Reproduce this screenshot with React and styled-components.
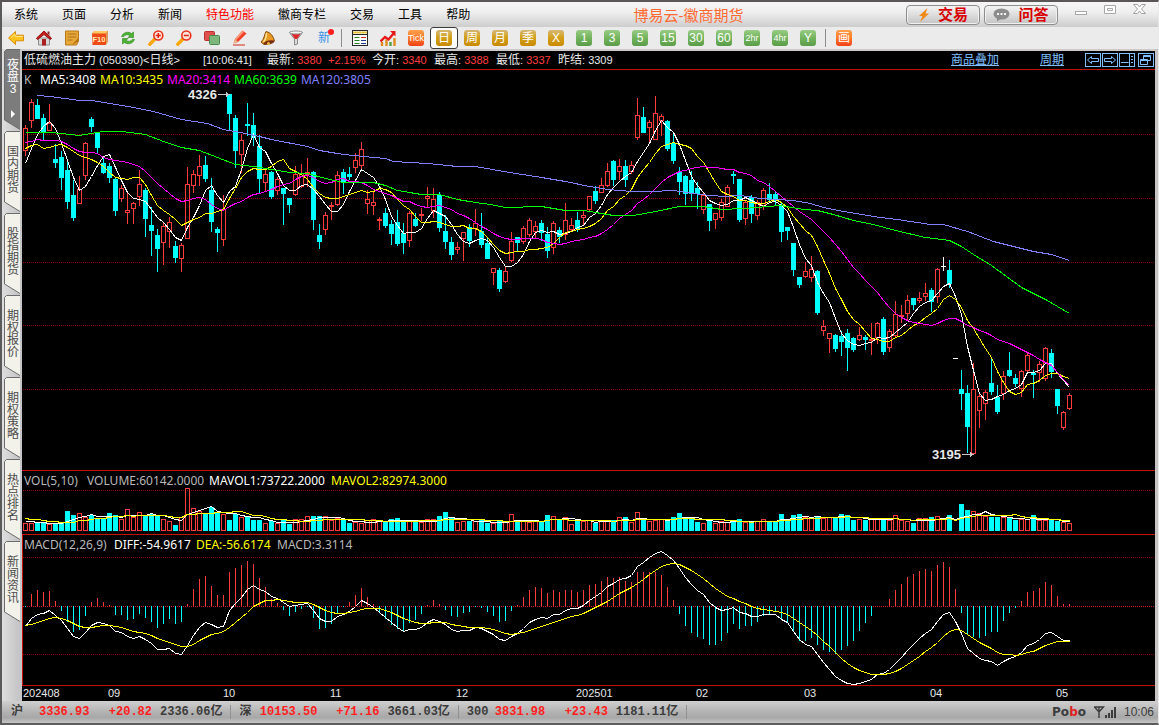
import React from "react";
import styled, { createGlobalStyle } from "styled-components";

const GlobalStyle = createGlobalStyle`
*{box-sizing:border-box;}
body{
margin:0;
font-family:"Liberation Sans","Noto Sans CJK SC",sans-serif;
font-size:12px;
}
button{font-family:inherit;border:0;padding:0;margin:0;background:none;cursor:pointer;}
svg{display:block;flex:none;}
`;

const RED = "#ff3c3c";
const CYAN = "#00ffff";

// kind (r = up, c = down, w = flat) then high, body top, body bottom, low
const CANDLES = `
r125,128,151,156 r99,102,121,128 c99,105,119,119 c114,118,132,140 r104,123,131,131
c144,159,163,168 c151,157,178,190 c161,170,202,209 c180,195,218,221 r176,189,204,204
r142,143,176,180 c117,119,127,132 c132,133,148,153 c157,163,173,174 c163,166,178,183
c178,179,211,216 r185,188,199,202 r192,210,213,224 r202,203,209,224 r170,184,197,206
c188,190,219,237 c207,225,231,256 c229,235,249,272 r223,226,243,265 r217,222,232,248
c241,246,258,263 r243,245,259,272 r167,184,239,239 r170,174,186,193 r155,166,176,186
c156,165,179,182 c178,190,222,232 c227,229,233,252 r195,209,240,246 c94,94,114,130
c115,118,151,168 r134,140,155,173 c103,124,126,136 c113,125,138,146 c135,146,179,193
r168,174,183,192 c171,172,197,199 r177,179,191,195 c188,188,194,225 c198,198,205,213
r166,174,195,196 r164,173,187,188 r158,172,175,187 c171,172,220,230 c224,235,242,249
r212,215,230,235 r202,205,206,220 r171,175,205,206 c169,172,182,194 c167,174,177,180
r153,160,168,173 r142,149,166,169 r190,199,204,214 r191,202,206,215 r217,219,221,230
c208,213,226,228 c220,224,234,245 c210,222,244,246 c223,233,243,254 r211,213,241,247
c213,219,226,227 r208,214,216,221 r187,196,199,207 r188,199,211,218 c192,195,228,232
c215,231,242,249 c237,242,255,260 r242,247,250,254 r232,232,239,261 c224,227,241,247
r209,223,229,236 c213,231,245,248 c237,243,259,259 r268,268,273,285 c268,270,289,292
r267,271,282,283 r232,241,261,262 c237,237,243,252 r226,228,242,244 r218,220,235,237
r221,226,232,238 c220,223,233,241 c227,234,251,258 r221,223,248,254 c227,230,237,243
r203,220,235,240 r218,225,230,232 c212,220,229,232 r211,215,218,225 r196,196,210,212
c186,191,201,204 r178,185,193,193 r163,171,186,187 c160,161,180,186 r159,166,172,180
c160,166,180,187 r161,165,172,174 r98,115,138,140 c107,117,133,133 r120,122,128,143
r96,113,140,140 r114,116,121,136 c120,121,149,151 c132,143,161,164 c167,172,182,195
c175,176,194,205 c171,180,194,201 c182,188,194,209 r193,195,210,214 c204,204,221,231
r213,213,220,229 r199,202,218,221 r185,187,207,207 c171,174,176,184 c179,179,220,222
r201,202,219,225 c195,197,214,223 r200,202,216,220 r188,190,206,210 c183,194,200,203
c191,194,201,205 c203,205,232,242 c227,227,231,240 c243,243,270,276 c277,277,285,288
r262,271,277,278 r256,269,278,282 c270,271,313,315 r320,326,331,336 r333,333,339,353
c334,335,349,352 c331,336,342,356 c329,333,348,371 c337,338,350,352 r327,335,340,341
c335,337,340,350 r323,339,341,355 r322,323,338,344 c317,319,352,355 r329,331,348,352
r301,314,336,338 r305,315,317,323 r295,300,314,321 c298,298,305,310 r292,298,301,303
r283,293,297,301 c288,290,302,312 r268,269,297,303 w257,266,267,271 c260,270,284,288
w358,358,359,359 c370,389,394,410 c385,393,427,453 r363,389,454,454 r394,396,411,428
r390,392,404,420 c359,383,392,395 c385,397,412,414 r371,376,394,400 c352,370,376,377
c374,378,384,387 r370,371,389,397 r353,355,371,372 c370,373,375,398 r361,364,373,382
r347,348,379,381 c349,353,372,378 c389,389,406,414 r411,412,428,430 r393,395,409,410
`
  .trim()
  .split(/\s+/)
  .map((s) => {
    const [high, top, bottom, low] = s.slice(1).split(",").map(Number);
    return { kind: s[0], high, top, bottom, low, close: s[0] === "c" ? bottom : top };
  });

const VOLUMES = [
  23, 23, 26, 23, 21, 23, 25, 60, 48, 53, 43, 48, 40, 36, 54, 48, 35, 65, 43, 56,
  48, 52, 46, 35, 29, 18, 43, 128, 68, 59, 52, 73, 55, 50, 33, 52, 43, 44, 33, 33,
  23, 30, 23, 33, 21, 35, 35, 44, 45, 45, 44, 32, 38, 33, 24, 28, 23, 32, 35, 32,
  30, 35, 38, 32, 30, 27, 28, 35, 35, 45, 56, 38, 26, 29, 30, 30, 32, 24, 23, 30,
  26, 50, 33, 30, 28, 30, 28, 48, 44, 35, 41, 20, 35, 30, 32, 24, 33, 30, 33, 41,
  42, 26, 56, 33, 30, 32, 35, 36, 42, 54, 43, 38, 27, 23, 32, 23, 30, 28, 30, 36,
  26, 29, 30, 36, 30, 28, 51, 33, 48, 51, 42, 40, 43, 40, 43, 41, 51, 47, 33, 35,
  33, 38, 38, 38, 32, 47, 32, 29, 23, 38, 38, 42, 44, 36, 48, 3, 81, 63, 59, 53,
  44, 42, 42, 43, 40, 33, 35, 36, 48, 32, 32, 33, 30, 26, 23,
];

const MA60 =
  "25,132 49,132 61,133 79,135 103,131 121,131 145,134 163,141 181,147 199,150 217,157 235,164 253,166 271,169 289,172 307,173 325,178 343,182 373,182 385,185 397,190 409,192 421,194 439,194 457,199 475,202 490,204 505,207 541,206 565,210 583,210 595,212 613,215 633,215 655,211 679,206 703,206 721,209 743,208 780,205 803,209 817,210 833,214 853,220 873,224 895,230 925,237 949,240 961,246 973,254 991,265 1021,287 1045,299 1069,313";
const MA120 =
  "37,95 50,96 79,100 91,100 109,103 115,104 133,107 153,111 181,119 207,123 223,129 240,132 259,136 271,139 307,146 319,150 343,154 373,157 385,158 393,161 427,163 457,166 475,166 509,172 535,176 565,181 589,186 607,189 631,191 650,191 673,190 700,194 723,196 740,195 760,198 793,200 810,203 823,207 843,211 880,217 897,219 930,224 943,224 967,231 993,241 1033,251 1051,254 1069,260";

const closes = CANDLES.map((c) => c.close);
const xOf = (i) => 25 + i * 6;

const average = (list, n, head) =>
  list.map((_, i) => {
    if (i < n - 1) return head[i];
    let sum = 0;
    for (let k = i - n + 1; k <= i; k++) sum += list[k];
    return sum / n;
  });

const toPoints = (list, yOf = (v) => v) =>
  list.map((v, i) => `${xOf(i)},${Math.round(yOf(v))}`).join(" ");

const ma5 = average(closes, 5, [163, 148, 134, 126]);
const ma10 = average(closes, 10, [148, 145, 144, 148, 147, 145, 144, 147, 151]);
const ma20 = average(closes, 20, [
  142, 141, 139, 140, 140, 140, 141, 144, 148, 151, 152, 152, 153, 157, 159, 160, 161, 162, 164,
]);
const mavol1 = average(VOLUMES, 5, [29, 29, 28, 26]);
const mavol2 = average(VOLUMES, 10, [38, 37, 35, 33, 31, 29, 27, 27, 26]);

// MACD(12,26,9)
let fast = 145.2;
let slow = 135;
let signal = 9.9;
const macd = closes.map((c, i) => {
  if (i > 0) {
    fast += ((c - fast) * 2) / 13;
    slow += ((c - slow) * 2) / 27;
    signal += (fast - slow - signal) * 0.2;
  }
  return { diff: (fast - slow) * 1.93, dea: signal * 1.93 };
});

const Window = styled.div`
min-height:100vh;
display:flex;
flex-direction:column;
background-color:#c8c4c4;
border-left:2px solid #5a5a5a;
border-top:2px solid #5a5656;
border-bottom:2px solid #5c5c5c;
border-right:1px solid #e8e8e8;
`;
const TitleBar = styled.header`
height:25px;
display:flex;
align-items:center;
background:linear-gradient(#f6f6f6,#efefef 40%,#cdcdcd);
`;
const Menu = styled.nav`
flex:20 1 0;
display:flex;
gap:24px;
padding-left:12px;
`;
const MenuItem = styled.button`
font-size:12px;
line-height:20px;
white-space:nowrap;
color:${(props) => (props.$hot ? "#ff0000" : "#000")};
`;
const AppTitle = styled.h1`
margin:0;
font-size:15px;
font-weight:400;
color:#ff6a33;
white-space:nowrap;
`;
const TitleTools = styled.div`
flex:13 1 0;
display:flex;
justify-content:flex-end;
align-items:center;
gap:4px;
padding-right:12px;
`;
const PillButton = styled.button`
display:flex;
align-items:center;
justify-content:center;
gap:8px;
width:74px;
height:20px;
border:1px solid #8e8e8e;
border-radius:4px;
background:linear-gradient(#f4f4f4,#dcdcdc 50%,#c4c4c4);
box-shadow:inset 0 0 0 1px #f0f0f0;
color:#d80000;
font-size:15px;
line-height:18px;
font-weight:700;
white-space:nowrap;
`;
const WindowButtons = styled.div`
display:flex;
gap:16px;
margin-left:13px;
padding-bottom:10px;
`;
const ToolBar = styled.div`
height:22px;
display:flex;
align-items:center;
background-color:#ebebeb;
`;
const ToolButton = styled.button`
width:28px;
height:22px;
display:flex;
align-items:center;
justify-content:center;
border:${(props) => (props.$active ? "1px solid #3a3a3a" : "0")};
border-radius:3px;
background-color:${(props) => (props.$active ? "#fff" : "transparent")};
`;
const Separator = styled.span`
width:1px;
height:18px;
margin:0 4px 0 3px;
background-color:#8c8c8c;
`;
const fills = {
  gold: "linear-gradient(#d6b878,#d3a11c 45%,#c98a00)",
  green: "linear-gradient(#98cc84,#74b45e 50%,#5a9c48)",
  orange: "linear-gradient(#ffa04c,#ff7a2a 50%,#f04018)",
};
const Chip = styled.span`
width:16px;
height:16px;
display:flex;
align-items:center;
justify-content:center;
overflow:hidden;
border-radius:3px;
background:${(props) => fills[props.$fill]};
color:#fff;
font-size:${(props) => (props.$small ? 9 : 12)}px;
line-height:16px;
white-space:nowrap;
`;
const NewsMark = styled.span`
position:relative;
color:#3a90e8;
font-size:12px;
line-height:18px;
&::after{
content:"";
position:absolute;
top:0;
right:-4px;
width:6px;
height:6px;
border-radius:50%;
background-color:#ff1e1e;
}
`;

const Main = styled.main`
flex:1;
display:flex;
`;
const SideTabs = styled.nav`
width:20px;
display:flex;
flex-direction:column;
gap:1px;
padding-left:2px;
background:linear-gradient(90deg,#dedede,#c6c6c8 80%);
`;
const Tab = styled.button`
position:relative;
width:16px;
height:81px;
padding:${(props) => (props.$active ? 10 : 15)}px 1px 0 3px;
font-size:12px;
line-height:12px;
text-align:center;
word-break:break-all;
display:flex;
align-items:flex-start;
color:${(props) => (props.$active ? "#fff" : "#4c4c4c")};
svg{position:absolute;left:0;top:0;}
span{position:relative;width:12px;}
`;

const Board = styled.section`
flex:1;
min-width:0;
display:flex;
flex-direction:column;
background-color:#000;
border-top:2px solid #cfcaca;
margin-right:3px;
overflow:hidden;
`;
const QuoteBar = styled.div`
height:19px;
display:flex;
align-items:center;
padding:0 1px 0 2px;
border-bottom:1px solid #c01408;
color:#e8e8e8;
font-size:11px;
line-height:18px;
white-space:nowrap;
`;
const Quote = styled.span`
width:${(props) => props.$width}px;
color:${(props) => (props.$up ? RED : "inherit")};
flex:none;
em{font-style:normal;color:${RED};}
b{font-weight:400;font-size:12px;}
`;
const QuoteLinks = styled.div`
flex:1;
display:flex;
justify-content:flex-end;
align-items:center;
gap:1px;
`;
const QuoteLink = styled.a`
color:#80c0ff;
font-size:12px;
text-decoration:underline;
margin-right:${(props) => props.$gap}px;
`;
const Panel = styled.div`
flex:${(props) => (props.$grow ? "1 0" : "0 0")} ${(props) => props.$height}px;
display:flex;
flex-direction:column;
border-bottom:1px solid #c01408;
border-left:${(props) => (props.$edge ? "1px solid #c01408" : "0")};
padding-left:${(props) => (props.$edge ? 0 : 1)}px;
`;
const Legend = styled.div`
height:18px;
display:flex;
gap:4px;
padding:2px 0 0 1px;
font-family:"Noto Sans",sans-serif;
font-size:12px;
line-height:16px;
white-space:nowrap;
`;
const LegendItem = styled.span`
color:${(props) => props.$color};
min-width:${(props) => props.$min || 0}px;
`;
const Plot = styled.svg`
width:100%;
height:0;
min-height:0;
flex:1 1 0;
overflow:visible;
`;
const Axis = styled.svg`
width:100%;
height:15px;
`;

const StatusBar = styled.footer`
height:22px;
display:flex;
align-items:center;
padding:0 4px 0 9px;
background:linear-gradient(#d0d0d0,#b0b0b0 55%,#a8a8a8 75%,#c4c4c4);
color:#3c3c3c;
font-family:"Liberation Mono","Noto Sans CJK SC",monospace;
font-size:12px;
font-weight:700;
white-space:nowrap;
`;
const Index = styled.div`
display:flex;
border-right:1px solid #909090;
line-height:14px;
margin-right:8px;
padding-right:8px;
`;
const IndexName = styled.span`
width:${(props) => props.$width}px;
`;
const IndexValue = styled.span`
width:${(props) => props.$width}px;
text-align:right;
margin-right:8px;
color:#ff2020;
`;
const StatusRight = styled.div`
flex:1;
display:flex;
justify-content:flex-end;
align-items:center;
gap:8px;
font-family:"Liberation Sans",sans-serif;
font-weight:400;
`;
const Brand = styled.span`
font-family:"DejaVu Sans",sans-serif;
font-weight:700;
i{font-style:normal;color:#e02020;}
`;

const Icon = ({ children, size = 16 }) => (
  <svg width={size} height={size} viewBox="0 0 16 16" aria-hidden="true">
    {children}
  </svg>
);

const BackIcon = () => (
  <Icon>
    <path d="M0.5 8 7.5 1.5v3.7h8v5.6h-8v3.7z" fill="#ffc21e" stroke="#d88e08" />
    <path d="M3 7.5 7 4v2.5h8" fill="none" stroke="#ffe58a" />
  </Icon>
);
const HomeIcon = () => (
  <Icon>
    <path d="M2.5 8h11v7h-11z" fill="#d8d8d8" stroke="#8c8c8c" />
    <path d="M0.5 8.2 8 1l7.5 7.2-1 1.3L8 4.5 1.5 9.5z" fill="#c81c1c" stroke="#941010" />
    <path d="M11.5 1.5h2v4l-2-2z" fill="#8c2a2a" />
    <path d="M6 9h4v6.5H6z" fill="#a82020" />
  </Icon>
);
const NoteIcon = () => (
  <Icon>
    <path d="M1.5 1h13v10l-2 4h-11z" fill="#e8a838" stroke="#b87818" />
    <path d="M3.500 4h9M3.500 7h9M3.500 10h5" stroke="#a87020" />
    <path d="M8 15l6-3.5V8z" fill="#b87014" />
  </Icon>
);
const F10Icon = () => (
  <Icon>
    <path d="M0 3.500 2.500 1H16l-.5 11-2 3H.500z" fill="#f04a18" />
    <path d="M0 3.500 2.500 1H16l-2 2.500z" fill="#ffc860" />
    <path d="M14 3.500 16 1l-.5 11-1.500 3z" fill="#d8a060" />
    <text x="0.500" y="12" fontSize="7.500" fontWeight="700" fill="#ffe9b0">F10</text>
  </Icon>
);
const RefreshIcon = () => (
  <Icon>
    <path d="M1.500 6.500C3.500 1.500 9 1.500 11.500 3.500L13.500 2v5.500H8l2-2C7.500 4.200 5 4.500 3.500 6.800z" fill="#4cb432" stroke="#2e8420" strokeWidth=".6" />
    <path d="M14.500 9.500C12.500 14.500 7 14.500 4.500 12.500L2.500 14V8.500H8l-2 2c2.500 1.300 5 1 6.500-1.300z" fill="#4cb432" stroke="#2e8420" strokeWidth=".6" />
  </Icon>
);
const MagnifyIcon = ({ plus }) => (
  <Icon>
    <path d="M6.500 9.500 1.800 14.200" stroke="#f8a80c" strokeWidth="3.400" strokeLinecap="round" />
    <circle cx="10.300" cy="5.500" r="4.500" fill="#ffe4dc" stroke="#e83018" strokeWidth="1.600" />
    <path d={plus ? "M7.800 5.500h5M10.300 3v5" : "M7.800 5.500h5"} stroke="#e02010" strokeWidth="1.500" />
  </Icon>
);
const LayersIcon = () => (
  <Icon>
    <rect x="0.500" y="1.500" width="10" height="9" rx="1" fill="#e0504a" stroke="#b83030" />
    <rect x="5.500" y="5.500" width="10" height="9" rx="1" fill="#7cb87c" stroke="#4a8a50" />
  </Icon>
);
const PencilIcon = () => (
  <Icon>
    <path d="M1.500 13.500 3 9 10.500 .500l4 3L6 12z" fill="#f04028" />
    <path d="M3 9 10.500 .500l1.500 1.200L4.200 10.200z" fill="#ff9a78" />
    <path d="M1.500 13.500 3 9 6 12z" fill="#e8b888" />
    <path d="M1 15h12" stroke="#d02818" />
  </Icon>
);
const BellIcon = () => (
  <Icon>
    <path d="M6 1.500c4.500 1 7 4 8.500 9.500L4 14.500 1 12C4.500 9 4 5 6 1.500z" fill="#e89a20" stroke="#8c4a0c" />
    <path d="M6.500 3c0 3-.5 6-3 9" stroke="#ffe090" strokeWidth="1.500" fill="none" />
    <ellipse cx="9" cy="12.500" rx="5.500" ry="2" fill="#7a2c10" transform="rotate(-12 9 12.500)" />
    <circle cx="8.500" cy="13.500" r="1.500" fill="#e8c040" />
  </Icon>
);
const FunnelIcon = () => (
  <Icon>
    <path d="M1.500 2.500 6.500 9v6l3-1V9l5-6.500z" fill="#dcdcdc" stroke="#8a8a8a" />
    <path d="M3.500 4h9L9 9H7z" fill="#e02828" />
    <ellipse cx="8" cy="2.500" rx="6.500" ry="1.500" fill="#f4f4f4" stroke="#909090" />
  </Icon>
);
const SheetIcon = () => (
  <Icon>
    <rect x="0.500" y="0.500" width="15" height="15" fill="#fff" stroke="#282828" />
    <path d="M1 2.500h14" stroke="#e8c040" strokeWidth="2" />
    <path d="M1 4.500h14" stroke="#282828" />
    <path d="M2.500 7.500h5M2.500 10.500h5M2.500 13.500h5" stroke="#208020" />
    <path d="M9 7.500h5" stroke="#d02020" />
    <path d="M9 10.500h5M9 13.500h5" stroke="#203890" />
  </Icon>
);
const TrendIcon = () => (
  <Icon>
    <path d="M2 16v-4M6.500 16V9.500M14.500 16V8" stroke="#e08c20" strokeWidth="2.400" />
    <path d="M10.500 16v-4" stroke="#50a040" strokeWidth="2.400" />
    <path d="M.5 11.500 5 7l3.500 2.500L14 3" fill="none" stroke="#e81818" strokeWidth="2.400" />
    <path d="M10 1H15.500V6.500z" fill="#e81818" />
  </Icon>
);

const leftTools = [
  ["后退", <BackIcon />],
  ["主页", <HomeIcon />],
  ["公告", <NoteIcon />],
  ["F10", <F10Icon />],
  ["刷新", <RefreshIcon />],
  ["放大", <MagnifyIcon plus />],
  ["缩小", <MagnifyIcon />],
  ["叠加", <LayersIcon />],
  ["画线", <PencilIcon />],
  ["预警", <BellIcon />],
  ["过滤", <FunnelIcon />],
  ["新", <NewsMark>新</NewsMark>],
];
const periods = [
  ["日", "gold"], ["周", "gold"], ["月", "gold"], ["季", "gold"], ["X", "gold"],
  ["1", "green"], ["3", "green"], ["5", "green"], ["15", "green"], ["30", "green"],
  ["60", "green"], ["2hr", "green"], ["4hr", "green"], ["Y", "green"],
];
const menus = ["系统", "页面", "分析", "新闻", "特色功能", "徽商专栏", "交易", "工具", "帮助"];
const tabs = ["夜盘3", "国内期货", "股指期货", "期权报价", "期权策略", "热点排名", "新闻资讯"];
const months = [
  [1, "202408"], [86, "09"], [201, "10"], [308, "11"], [434, "12"],
  [554, "202501"], [674, "02"], [782, "03"], [908, "04"], [1034, "05"],
];
const indexes = [
  { name: "沪", first: 28, value: "3336.93", change: "+20.82", amount: "2336.06亿", w1: 50, w2: 55 },
  { name: "深", first: 20, value: "10153.50", change: "+71.16", amount: "3661.03亿", w1: 58, w2: 54 },
  { name: "300", first: 28, value: "3831.98", change: "+23.43", amount: "1181.11亿", w1: 50, w2: 55 },
];

const GridLine = ({ y, color = "#8c0000" }) => (
  <line x1="23" x2="4001" y1={y + 0.5} y2={y + 0.5} stroke={color} strokeDasharray="1 1" />
);

const Line = ({ points, color }) => (
  <polyline points={points} fill="none" stroke={color} strokeWidth="1" transform="translate(.5 .5)" />
);

const Candle = ({ data, x }) => {
  const { kind, high, top, bottom, low } = data;
  if (kind === "r") {
    return (
      <g fill="none" stroke={RED}>
        <path d={`M${x + 0.5} ${high}V${top}M${x + 0.5} ${bottom}V${low}`} />
        <rect x={x - 1.5} y={top + 0.5} width="4" height={Math.max(bottom - top - 1, 1)} />
      </g>
    );
  }
  return (
    <g fill={kind === "w" ? "#fff" : CYAN}>
      <rect x={x} y={high} width="1" height={low - high} />
      <rect x={x - 2} y={top} width="5" height={bottom - top} />
    </g>
  );
};

const PricePlot = () => (
  <Plot>
    <g transform="translate(-23 -88)" shapeRendering="crispEdges">
      {[134, 198, 262, 325, 389].map((y) => <GridLine key={y} y={y} />)}
      {CANDLES.map((c, i) => <Candle key={i} data={c} x={xOf(i)} />)}
      <Line points={toPoints(ma5)} color="#ffffff" />
      <Line points={toPoints(ma10)} color="#ffff00" />
      <Line points={toPoints(ma20)} color="#ff00ff" />
      <Line points={MA60} color="#00ff00" />
      <Line points={MA120} color="#8080ff" />
      <g fill="#e8e8e8" fontSize="13" fontWeight="700" fontFamily="Liberation Sans, sans-serif">
        <text x="188" y="99">4326</text>
        <text x="932" y="459">3195</text>
      </g>
      <path d="M218 94.500h10M962 454.500h10" stroke="#c8c8c8" />
      <path d="M226 92v5l4-2.500zM970 452v5l4-2.500z" fill="#c8c8c8" />
    </g>
  </Plot>
);

const VolumePlot = () => (
  <Plot>
    <g transform="translate(-23 -489)" shapeRendering="crispEdges">
      <GridLine y={490} />
      {VOLUMES.map((v, i) => {
        const h = Math.round(v / 3);
        const x = xOf(i);
        return CANDLES[i].kind === "c" ? (
          <rect key={i} x={x - 2} y={531 - h} width="5" height={h} fill={CYAN} />
        ) : (
          <rect key={i} x={x - 1.5} y={531.5 - h} width="4" height={Math.max(h - 1, 0)} fill="none" stroke={RED} />
        );
      })}
      <Line points={toPoints(mavol1, (v) => 531 - v / 3)} color="#ffffff" />
      <Line points={toPoints(mavol2, (v) => 531 - v / 3)} color="#ffff00" />
    </g>
  </Plot>
);

const MacdPlot = () => (
  <Plot>
    <g transform="translate(-23 -553)" shapeRendering="crispEdges">
      <GridLine y={557} />
      <GridLine y={606} color="#d01818" />
      <GridLine y={654} />
      {macd.map(({ diff, dea }, i) => {
        const h = Math.round((dea - diff) * 2);
        return (
          <rect
            key={i}
            x={xOf(i)}
            y={h > 0 ? 606 - h : 606}
            width="1"
            height={Math.abs(h)}
            fill={h > 0 ? RED : CYAN}
          />
        );
      })}
      <Line points={toPoints(macd, (m) => 606 + m.diff)} color="#ffffff" />
      <Line points={toPoints(macd, (m) => 606 + m.dea)} color="#ffff00" />
    </g>
  </Plot>
);

const TabShape = ({ active }) => (
  <svg width="16" height="81" viewBox="0 0 16 81" aria-hidden="true">
    <path d="M2.500.500H16V80.500L.500 71V2.500z" fill={active ? "#7c7c7c" : "#f2f1ea"} />
    <path d="M16 .500H2.500L.500 2.500V71L16 80.500" fill="none" stroke="#6c6c6c" />
    {active && <path d="M7 61v8l4-4z" fill="#fff" />}
  </svg>
);

const CornerIcon = ({ d }) => (
  <svg width="16" height="14" viewBox="0 0 16 14" fill="none" stroke="#80c0ff" aria-hidden="true">
    <rect x=".5" y=".5" width="15" height="13" />
    <path d={d} />
  </svg>
);

export const App = () => {
  return (
    <>
      <GlobalStyle />
      <Window>
        <TitleBar>
          <Menu>
            {menus.map((m) => (
              <MenuItem key={m} $hot={m === "特色功能"}>{m}</MenuItem>
            ))}
          </Menu>
          <AppTitle>博易云-徽商期货</AppTitle>
          <TitleTools>
            <PillButton>
              <svg width="12" height="14" viewBox="0 0 12 14" aria-hidden="true">
                <path d="M9.500 0 1 8h3.500L2 14l9-8.500H7.500z" fill="#f08a18" />
              </svg>
              交易
            </PillButton>
            <PillButton>
              <svg width="17" height="14" viewBox="0 0 17 14" aria-hidden="true">
                <ellipse cx="8.500" cy="6" rx="8" ry="5.500" fill="#8c8c8c" />
                <path d="M4 9v4.500L9 10z" fill="#8c8c8c" />
                <path d="M4 6h2M7.500 6h2M11 6h2" stroke="#f4f4f4" strokeWidth="2" />
              </svg>
              问答
            </PillButton>
            <WindowButtons>
              <button aria-label="最小化">
                <svg width="13" height="12" fill="#fff" stroke="#a8a8a8"><rect x=".5" y="7.500" width="11" height="3" /></svg>
              </button>
              <button aria-label="最大化">
                <svg width="13" height="12" fill="#fff" stroke="#a8a8a8"><path d="M.5 1.500h11v8H.500zM3.500 4.500h5v2h-5z" /></svg>
              </button>
              <button aria-label="关闭">
                <svg width="13" height="12" fill="#fff" stroke="#a0a0a0"><path d="M.5.500h4l2 2.500 2-2.500h4l-4 4.500 4 4.500h-4l-2-2.500-2 2.500h-4l4-4.500z" /></svg>
              </button>
            </WindowButtons>
          </TitleTools>
        </TitleBar>

        <ToolBar>
          {leftTools.map(([name, icon]) => (
            <ToolButton key={name} aria-label={name}>{icon}</ToolButton>
          ))}
          <Separator />
          <ToolButton aria-label="报价"><SheetIcon /></ToolButton>
          <ToolButton aria-label="走势"><TrendIcon /></ToolButton>
          <ToolButton><Chip $fill="orange" $small>Tick</Chip></ToolButton>
          {periods.map(([label, fill]) => (
            <ToolButton key={label} $active={label === "日"}>
              <Chip $fill={fill} $small={label.length > 2}>{label}</Chip>
            </ToolButton>
          ))}
          <Separator />
          <ToolButton><Chip $fill="orange">画</Chip></ToolButton>
        </ToolBar>

        <Main>
          <SideTabs>
            {tabs.map((t, i) => (
              <Tab key={t} $active={i === 0}>
                <TabShape active={i === 0} />
                <span>{t}</span>
              </Tab>
            ))}
          </SideTabs>
          <Board>
            <QuoteBar>
              <Quote $width={179}><b>低硫燃油主力</b> (050390)&lt;<b>日线</b>&gt;</Quote>
              <Quote $width={64}>[10:06:41]</Quote>
              <Quote $width={61}><b>最新</b>: <em>3380</em></Quote>
              <Quote $width={44} $up>+2.15%</Quote>
              <Quote $width={62}><b>今开</b>: <em>3340</em></Quote>
              <Quote $width={62}><b>最高</b>: <em>3388</em></Quote>
              <Quote $width={62}><b>最低</b>: <em>3337</em></Quote>
              <Quote $width={62}><b>昨结</b>: 3309</Quote>
              <QuoteLinks>
                <QuoteLink href="#overlay" $gap={40}>商品叠加</QuoteLink>
                <QuoteLink href="#period" $gap={20}>周期</QuoteLink>
                <CornerIcon d="M2.500 7 6.500 3.500V5.500H13.500V8.500H6.500V10.500z" />
                <CornerIcon d="M13.500 7 9.500 3.500V5.500H2.500V8.500H9.500V10.500z" />
                <CornerIcon d="M2 9.500H9.500M10.500 1V13M12 3.500h2M12 6.500h2M12 9.500h2" />
                <span />
                <span />
                <CornerIcon d="M5.500 2.500h7v5h-7zM5.500 3.500h7M2.500 6.500h7v5h-7zM2.500 7.500h7" />
              </QuoteLinks>
            </QuoteBar>
            <Panel $grow $height={401}>
              <Legend>
                <LegendItem $color="#b8b8b8" $min={12}>K</LegendItem>
                <LegendItem $color="#fff">MA5:3408</LegendItem>
                <LegendItem $color="#ffff00">MA10:3435</LegendItem>
                <LegendItem $color="#ff00ff">MA20:3414</LegendItem>
                <LegendItem $color="#00ff00">MA60:3639</LegendItem>
                <LegendItem $color="#8080ff">MA120:3805</LegendItem>
              </Legend>
              <PricePlot />
            </Panel>
            <Panel $height={64}>
              <Legend>
                <LegendItem $color="#b8b8b8" $min={59}>VOL(5,10)</LegendItem>
                <LegendItem $color="#b8b8b8" $min={118}>VOLUME:60142.0000</LegendItem>
                <LegendItem $color="#fff" $min={118}>MAVOL1:73722.2000</LegendItem>
                <LegendItem $color="#ffff00">MAVOL2:82974.3000</LegendItem>
              </Legend>
              <VolumePlot />
            </Panel>
            <Panel $height={151} $edge>
              <Legend>
                <LegendItem $color="#b8b8b8" $min={86}>MACD(12,26,9)</LegendItem>
                <LegendItem $color="#fff" $min={78}>DIFF:-54.9617</LegendItem>
                <LegendItem $color="#ffff00" $min={77}>DEA:-56.6174</LegendItem>
                <LegendItem $color="#b8b8b8">MACD:3.3114</LegendItem>
              </Legend>
              <MacdPlot />
            </Panel>
            <Axis>
              <g fill="#e8e8e8" fontSize="11" fontFamily="Liberation Sans, sans-serif">
                {months.map(([x, label]) => <text key={label} x={x} y="11">{label}</text>)}
              </g>
            </Axis>
          </Board>
        </Main>

        <StatusBar>
          {indexes.map((q) => (
            <Index key={q.name}>
              <IndexName $width={q.first}>{q.name}</IndexName>
              <IndexValue $width={q.w1}>{q.value}</IndexValue>
              <IndexValue $width={q.w2}>{q.change}</IndexValue>
              <span>{q.amount}</span>
            </Index>
          ))}
          <StatusRight>
            <Brand>Po<i>b</i>o</Brand>
            <svg width="22" height="12" fill="none" stroke="#3c3c3c" aria-hidden="true">
              <path d="M.5 1h9L5 6zM5 1v11" strokeWidth="1.400" />
              <path d="M12 12V9M15 12V7M18 12V4M21 12V1" strokeWidth="2" />
            </svg>
            <span>10:06</span>
          </StatusRight>
        </StatusBar>
      </Window>
    </>
  );
};

export default App;
